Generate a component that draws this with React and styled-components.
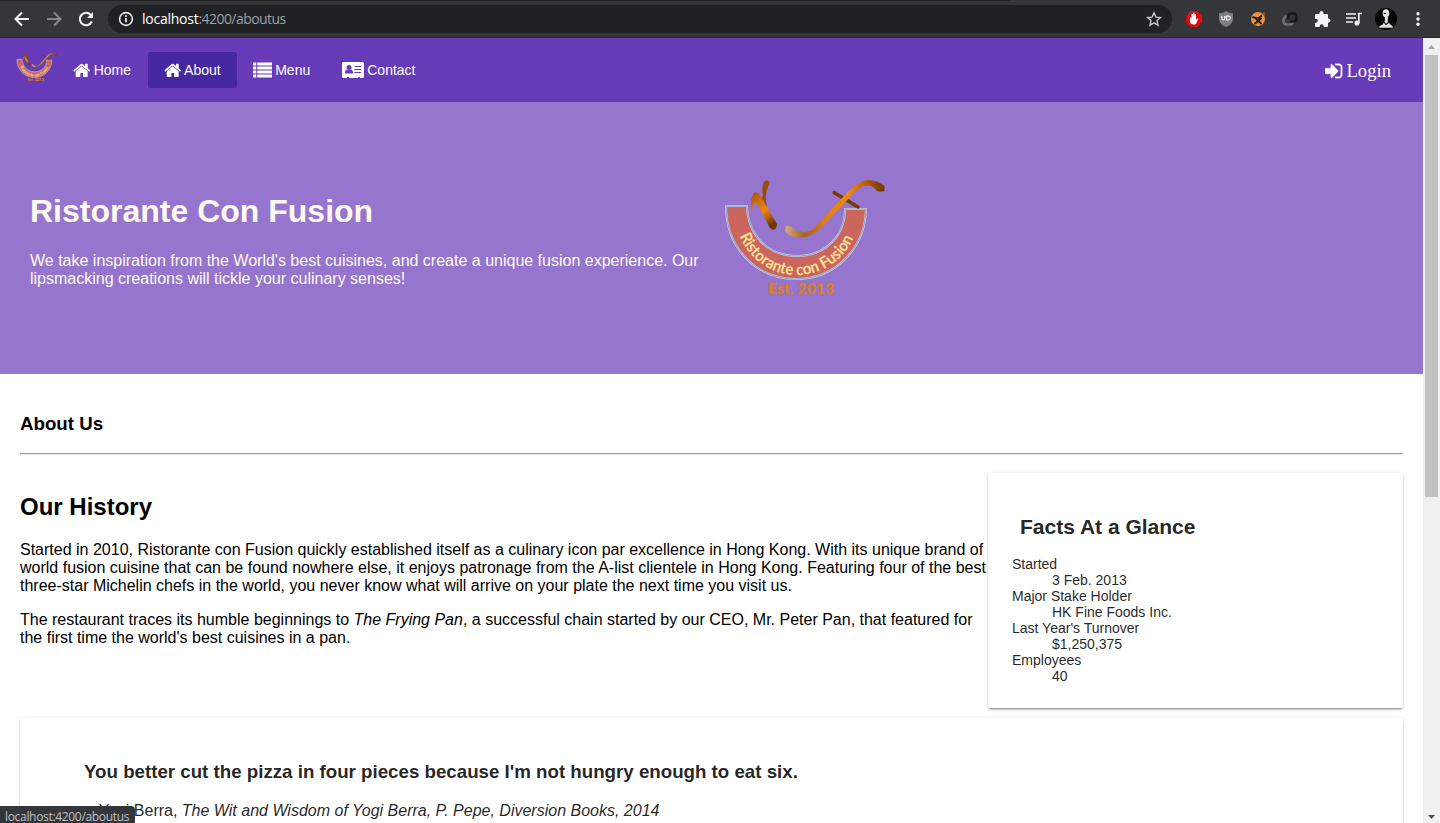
import React from 'react';
import styled, { createGlobalStyle } from 'styled-components';

const GlobalStyle = createGlobalStyle`
  *, *::before, *::after { box-sizing: border-box; }
  html, body { margin: 0; height: 100%; overflow: hidden; }
  body { font-family: "Liberation Sans", Arial, sans-serif; font-size: 16px; line-height: 18px; color: #000; background: #fff; }
`;

const Window = styled.div`
  position: relative;
  display: flex;
  flex-direction: column;
  width: 1440px;
  height: 823px;
  overflow: hidden;
`;

/* Browser chrome */
const BrowserBar = styled.header`
  flex: none;
  display: flex;
  align-items: center;
  height: 38px;
  padding-left: 12px;
  background: linear-gradient(90deg, #202124 1009px, #35363a 1009px) top / 100% 1px no-repeat, #35363a;
  border-bottom: 1px solid #2b2a30;
`;
const BarIcon = styled.svg`
  flex: none;
  display: block;
  width: ${(p) => p.$size ?? 20}px;
  height: ${(p) => p.$size ?? 20}px;
  margin-right: ${(p) => p.$gap ?? 12}px;
`;
const AddressBar = styled.div`
  display: flex;
  align-items: center;
  width: 1064px;
  height: 28px;
  padding: 0 8px;
  margin-right: 12px;
  border-radius: 14px;
  background: #202124;
`;
const Url = styled.span`
  flex: 1;
  font: 14px/20px "Open Sans", "Noto Sans", sans-serif;
  letter-spacing: -0.55px;
  color: #9aa0a6;
  b { font-weight: 400; letter-spacing: -0.25px; color: #fff; }
`;

const Viewport = styled.div`
  display: flex;
  flex: 1;
  min-height: 0;
`;
const Page = styled.div`
  flex: 1;
  min-width: 0;
  overflow: hidden;
`;
const Scrollbar = styled.div`
  display: flex;
  flex-direction: column;
  align-items: center;
  width: 17px;
  background: #f1f1f1;
`;
const ScrollArrow = styled.svg`
  flex: none;
  width: 17px;
  height: 17px;
`;
const ScrollThumb = styled.div`
  width: 13px;
  height: 442px;
  margin-bottom: auto;
  background: #c1c1c1;
`;

/* Site toolbar */
const Toolbar = styled.nav`
  display: flex;
  align-items: center;
  height: 64px;
  padding: 0 32px 0 16px;
  background: #673ab7;
  color: #fff;
`;
const SmallLogo = styled.svg`
  flex: none;
  width: 41.3px;
  height: 30px;
  margin-bottom: 7px;
`;
const NavButton = styled.a`
  display: flex;
  align-items: center;
  gap: 3px;
  height: 36px;
  padding: 0 16px;
  border-radius: 2px;
  font-size: 14px;
  background: ${(p) => (p.$active ? '#45289f' : 'transparent')};
  &:first-of-type { padding-right: 16.8px; }
`;
const LoginLink = styled.span`
  display: flex;
  align-items: center;
  gap: 3px;
  margin-left: auto;
  font: 18.67px/22px "Liberation Serif", "Times New Roman", serif;
  padding-top: 2px;
`;
const Glyph = styled.svg`
  flex: none;
  width: ${(p) => p.$w}px;
  height: ${(p) => p.$h ?? 18.67}px;
  fill: currentColor;
`;

/* Hero */
const Hero = styled.section`
  display: flex;
  align-items: flex-start;
  height: 272px;
  padding: 75px 30px 0;
  background: #9575cd;
  color: #fffaf0;
`;
const HeroText = styled.div`
  width: 693px;
  padding: 16px 20px 0 0;
`;
const HeroTitle = styled.h1`
  margin: 0 0 23px;
  font-size: 32px;
  line-height: 36px;
`;
const Paragraph = styled.p`
  margin: 0 0 16px;
`;
const HeroLogo = styled.svg`
  width: 164px;
  height: 120px;
`;

/* Content */
const Content = styled.main`
  padding: 39px 20px 0;
`;
const SectionTitle = styled.h3`
  margin: 0 0 ${(p) => p.$gap ?? 20}px;
  font-size: 18.72px;
  line-height: 21px;
`;
const Divider = styled.hr`
  height: 2px;
  margin: 0 0 18px;
  border: 1px solid;
  border-color: #9a9a9a #eee #eee #9a9a9a;
`;
const Columns = styled.div`
  display: flex;
  height: 235px;
  margin-bottom: 10px;
`;
const History = styled.article`
  width: 968px;
  padding-top: 20px;
`;
const HistoryTitle = styled.h2`
  margin: 0 0 21px;
  font-size: 24px;
  line-height: 27px;
`;
const Card = styled.section`
  flex: 1;
  border-radius: 2px;
  background: #fff;
  color: rgba(0, 0, 0, 0.87);
  box-shadow: 0 3px 1px -2px rgba(0, 0, 0, 0.2), 0 2px 2px 0 rgba(0, 0, 0, 0.14), 0 1px 5px 0 rgba(0, 0, 0, 0.12);
`;
const FactsCard = styled(Card)`
  padding: 42px 24px 24px;
`;
const FactsTitle = styled.h2`
  margin: 0 8px 17px;
  font-size: 21px;
  line-height: 24px;
`;
const Facts = styled.dl`
  margin: 0;
  font-size: 14px;
  line-height: 16px;
  dd { margin: 0 0 0 40px; }
`;
const QuoteCard = styled(Card)`
  height: 180px;
  padding: 43px 64px 0;
`;

const StatusBubble = styled.div`
  position: absolute;
  left: 0;
  bottom: 0;
  width: 135px;
  height: 17px;
  padding-left: 5px;
  border-top-right-radius: 4px;
  background: #35363a;
  color: #bdc1c6;
  font: 12px/21px "Open Sans", "Noto Sans", sans-serif;
  letter-spacing: -0.32px;
  white-space: nowrap;
`;

const HomeIcon = () => (
  <Glyph $w={17.33} viewBox="64 0 1664 1792">
    <path d="M1472 992v480q0 26-19 45t-45 19h-384v-384h-256v384h-384q-26 0-45-19t-19-45v-480q0-1 .5-3t.5-3l575-474 575 474q1 2 1 6zm223-69l-62 74q-8 9-21 11h-3q-13 0-21-7l-692-577-692 577q-12 8-24 7-13-2-21-11l-62-74q-8-10-7-23.500t11-21.500l719-599q32-26 76-26t76 26l244 204v-195q0-14 9-23t23-9h192q14 0 23 9t9 23v408l219 182q10 8 11 21.500t-7 23.500z" />
  </Glyph>
);
const ListIcon = () => (
  <Glyph $w={19.5} $h={16} viewBox="0 0 19.500 16">
    {[0, 4, 8, 12].map((y) => (
      <React.Fragment key={y}>
        <rect x="0" y={y + 0.4} width="3.300" height="3.100" rx=".4" />
        <rect x="4.200" y={y + 0.4} width="15.300" height="3.100" rx=".4" />
      </React.Fragment>
    ))}
  </Glyph>
);
const AddressCardIcon = () => (
  <Glyph $w={22} $h={18} viewBox="0 0 22 18">
    <path d="M1.500 1h19Q22 1 22 2.500v13q0 1.500-1.500 1.500H18v-1h-2v1H7v-1H5v1H1.500Q0 17 0 15.500v-13Q0 1 1.500 1z" />
    <g fill="#673ab7">
      <circle cx="7" cy="6.500" r="2.500" />
      <path d="M3 12.600q0-3.700 2-4 2 1.500 4 0 2 .3 2 4z" />
      <path d="M12.500 5H19v1h-6.500zM12.500 8H19v1h-6.500zM12.500 11H19v1h-6.500z" />
    </g>
  </Glyph>
);
const SignInIcon = () => (
  <Glyph $w={18} $h={20} viewBox="128 0 1600 1792">
    <path stroke="currentColor" strokeWidth="30" d="M1312 896q0 26-19 45l-544 544q-19 19-45 19t-45-19-19-45v-288h-448q-26 0-45-19t-19-45v-384q0-26 19-45t45-19h448v-288q0-26 19-45t45-19 45 19l544 544q19 19 19 45zm352-352v704q0 119-84.500 203.500t-203.500 84.500h-320q-13 0-22.500-9.500t-9.500-22.500q0-4-1-20t-.5-26.500 3-23.500 10-19.500 20.500-6.500h320q66 0 113-47t47-113v-704q0-66-47-113t-113-47h-312l-11.500-1-11.500-3-8-5.500-7-9-2-13.500q0-4-1-20t-.5-26.500 3-23.500 10-19.500 20.500-6.500h320q119 0 203.500 84.500t84.500 203.500z" />
  </Glyph>
);

function LogoArt({ id }) {
  return (
    <>
      <defs>
        <linearGradient id={`${id}-stroke`} x1="0" y1="0" x2="1" y2="0">
          <stop offset="0" stopColor="#d3ab8c" />
          <stop offset=".2" stopColor="#a8611c" />
          <stop offset=".42" stopColor="#e38210" />
          <stop offset=".65" stopColor="#ee8a12" />
          <stop offset=".85" stopColor="#a85406" />
          <stop offset="1" stopColor="#713600" />
        </linearGradient>
        <linearGradient id={`${id}-leg`} x1="0" y1="0" x2=".5" y2="1">
          <stop offset="0" stopColor="#a65205" />
          <stop offset=".6" stopColor="#ed8814" />
          <stop offset="1" stopColor="#713600" />
        </linearGradient>
        <path id={`${id}-arc`} d="M16 57A61.500 61.500 0 0 0 132 57" />
      </defs>
      <path d="M3 29H24C25 59 45 79 74 79S122 58 122 32H143C142 72 112 102 73 102S3 72 3 29Z" fill="#cb665f" stroke="#d9d0df" strokeWidth="2" />
      <path d="M3 29H24C25 59 45 79 74 79S122 58 122 32H143C142 72 112 102 73 102S3 72 3 29Z" fill="none" stroke="#6796d0" strokeWidth=".8" />
      <path d="M40 18Q38 8 42 4Q44 3 46 4.500Q47 7 45 10Q41 17 44 30L38 25Z" fill="#9a4c06" />
      <path d="M28 33Q27 24 30 17Q33 13 37 18L54 47Q54 52 50 53L47 51L33 25Q30 25 29.500 33Z" fill={`url(#${id}-leg)`} />
      <path d="M111 15.500L135 30" stroke="#763900" strokeWidth="3.400" strokeLinecap="round" />
      <path d="M63 49Q67 48 73 53Q83 58 90 52L120 20Q133 5 143 3Q153 2 161.500 9V14Q157 15.500 154 14Q147 5 137 11Q132 14 126 21L101 48Q89 61 76 61Q66 60 62 54Z" fill={`url(#${id}-stroke)`} />
      <text fill="#ffe093" fontFamily="Lato, sans-serif" fontSize="16" fontWeight="700">
        <textPath href={`#${id}-arc`} startOffset="2" textLength="145" lengthAdjust="spacingAndGlyphs">Ristorante con Fusion</textPath>
      </text>
      <text x="45" y="116.500" fill="#e5850f" stroke="#c5702a" strokeWidth=".35" fontFamily="Lato, sans-serif" fontSize="15.500" fontWeight="700" textLength="66">Est. 2013</text>
    </>
  );
}

const NAV = [
  { label: 'Home', icon: <HomeIcon /> },
  { label: 'About', icon: <HomeIcon />, active: true },
  { label: 'Menu', icon: <ListIcon /> },
  { label: 'Contact', icon: <AddressCardIcon /> },
];

const FACTS = [
  ['Started', '3 Feb. 2013'],
  ['Major Stake Holder', 'HK Fine Foods Inc.'],
  ["Last Year's Turnover", '$1,250,375'],
  ['Employees', '40'],
];

function Browser() {
  return (
    <BrowserBar>
      <BarIcon viewBox="0 0 20 20" fill="none" stroke="#f1f3f4" strokeWidth="2"><path d="M17 10H4M10 3.500L3.500 10l6.500 6.500" /></BarIcon>
      <BarIcon viewBox="0 0 20 20" fill="none" stroke="#85878b" strokeWidth="2"><path d="M3 10h13M10 3.500l6.500 6.500-6.500 6.500" /></BarIcon>
      <BarIcon viewBox="0 0 20 20" fill="none" stroke="#f1f3f4" strokeWidth="2"><path d="M15.800 12.500a6.200 6.200 0 1 1-1-6.500" /><path d="M17 3v6h-6z" fill="#f1f3f4" stroke="none" /></BarIcon>
      <AddressBar>
        <BarIcon $gap={6} viewBox="0 0 20 20" fill="none" stroke="#e8eaed" strokeWidth="1.600"><circle cx="10" cy="10" r="6.400" /><path d="M10 9v4.200M10 6.200v1.800" strokeWidth="1.800" /></BarIcon>
        <Url><b>localhost</b>:4200/aboutus</Url>
        <BarIcon $gap={0} viewBox="0 0 20 20" fill="none" stroke="#c6c8cb" strokeWidth="1.400"><path d="M10 3.800l1.900 4.300 4.600.4-3.500 3.100 1 4.600-4-2.400-4 2.400 1-4.600-3.500-3.100 4.600-.4z" /></BarIcon>
      </AddressBar>
      <BarIcon viewBox="0 0 20 20"><path d="M6.700 2h6.600L18 6.700v6.600L13.300 18H6.700L2 13.300V6.700z" fill="#e10b12" /><path d="M6 8.500q.8-.8 1.500.2V5.300q.8-1 1.500 0V4q.8-.8 1.500 0v1.500q.8-.8 1.500 0V11l1-1.500q1.300-.6 1.200.3l-1.900 4.400q-.5 1.300-2.300 1.300Q6 15.500 6 12z" fill="#fff" /></BarIcon>
      <BarIcon viewBox="0 0 20 20"><path d="M10 2q3 2.200 7 2.200V10q0 5-7 8-7-3-7-8V4.200Q7 4.200 10 2z" fill="#7d7d7d" /><path d="M5.800 7v2.500q0 1.400 1.500 1.400t1.500-1.400V7M10.500 7v4q3.700.3 3.700-2t-3.700-2z" fill="none" stroke="#fff" strokeWidth="1.100" /></BarIcon>
      <BarIcon viewBox="0 0 20 20"><circle cx="10" cy="10" r="7" fill="#e7943d" /><path d="M13 5l3.500-2 .5 4z" fill="#a75b16" /><path d="M4.500 8l5 1.500M14 6.500l-4 3M6.500 15l7-6M7.500 9l6 6" stroke="#2c1910" strokeWidth="1.900" /></BarIcon>
      <BarIcon viewBox="0 0 20 20" fill="none" strokeWidth="2.600"><path d="M8 7.500H7Q3.500 7.500 3.500 11.500T7 15.500H9.500Q13 15.500 13 12" stroke="#707070" /><path d="M8 10V8Q8 4.500 11.500 4.500H13q3.500 0 3.500 4T13 12.500H10" stroke="#17181a" /></BarIcon>
      <BarIcon viewBox="0 0 20 20"><path d="M4 5h3.500V4a2 2 0 0 1 4 0v1H15q1 0 1 1v3.500h.5a2 2 0 0 1 0 4H16V17q0 1-1 1h-3.300v-.8a2 2 0 0 0-4 0v.8H4q-1 0-1-1v-3.300h.8a2 2 0 0 0 0-4H3V6q0-1 1-1z" fill="#f1f3f4" /></BarIcon>
      <BarIcon $gap={11} viewBox="0 0 20 20" fill="none" stroke="#f1f3f4" strokeWidth="1.700"><path d="M2 5h10M2 9h10M2 13h7M14.800 14V4.500H18" /><circle cx="13" cy="14" r="1.700" fill="#f1f3f4" /></BarIcon>
      <BarIcon $gap={11} $size={22} viewBox="0 0 20 20"><circle cx="10" cy="10" r="10" fill="#050505" /><ellipse cx="10" cy="4.800" rx="3" ry="3.600" fill="#e5e5e5" /><path d="M9 8h3l-.5 4 2 2.500 2.500 2v1.500H4v-1.500l3-1.500 2-3.500z" fill="#ddd" /><path d="M7.500 12l2.500 3 2.500-2M8 5h2" stroke="#111" fill="none" /></BarIcon>
      <BarIcon $gap={0} viewBox="0 0 20 20" fill="#f1f3f4"><circle cx="10" cy="4.800" r="1.700" /><circle cx="10" cy="10" r="1.700" /><circle cx="10" cy="15.200" r="1.700" /></BarIcon>
    </BrowserBar>
  );
}

export default function App() {
  return (
    <Window>
      <GlobalStyle />
      <Browser />
      <Viewport>
        <Page>
          <Toolbar>
            <SmallLogo viewBox="0 0 164 120"><LogoArt id="small" /></SmallLogo>
            {NAV.map((item) => (
              <NavButton key={item.label} $active={item.active}>{item.icon}{item.label}</NavButton>
            ))}
            <LoginLink><SignInIcon />Login</LoginLink>
          </Toolbar>
          <Hero>
            <HeroText>
              <HeroTitle>Ristorante Con Fusion</HeroTitle>
              <Paragraph>We take inspiration from the World's best cuisines, and create a unique fusion experience. Our lipsmacking creations will tickle your culinary senses!</Paragraph>
            </HeroText>
            <HeroLogo viewBox="0 0 164 120"><LogoArt id="hero" /></HeroLogo>
          </Hero>
          <Content>
            <SectionTitle $gap={19}>About Us</SectionTitle>
            <Divider />
            <Columns>
              <History>
                <HistoryTitle>Our History</HistoryTitle>
                <Paragraph>Started in 2010, Ristorante con Fusion quickly established itself as a culinary icon par excellence in Hong Kong. With its unique brand of world fusion cuisine that can be found nowhere else, it enjoys patronage from the A-list clientele in Hong Kong. Featuring four of the best three-star Michelin chefs in the world, you never know what will arrive on your plate the next time you visit us.</Paragraph>
                <Paragraph>The restaurant traces its humble beginnings to <em>The Frying Pan</em>, a successful chain started by our CEO, Mr. Peter Pan, that featured for the first time the world's best cuisines in a pan.</Paragraph>
              </History>
              <FactsCard>
                <FactsTitle>Facts At a Glance</FactsTitle>
                <Facts>
                  {FACTS.map(([term, value]) => (
                    <React.Fragment key={term}><dt>{term}</dt><dd>{value}</dd></React.Fragment>
                  ))}
                </Facts>
              </FactsCard>
            </Columns>
            <QuoteCard>
              <SectionTitle>You better cut the pizza in four pieces because I'm not hungry enough to eat six.</SectionTitle>
              <Paragraph>-- Yogi Berra, <em>The Wit and Wisdom of Yogi Berra, P. Pepe, Diversion Books, 2014</em></Paragraph>
            </QuoteCard>
          </Content>
        </Page>
        <Scrollbar>
          <ScrollArrow viewBox="0 0 17 17"><path d="M5 11l3.500-4 3.500 4z" fill="#a3a3a3" /></ScrollArrow>
          <ScrollThumb />
          <ScrollArrow viewBox="0 0 17 17"><path d="M5 9l3.500 4L12 9z" fill="#505050" /></ScrollArrow>
        </Scrollbar>
      </Viewport>
      <StatusBubble>localhost:4200/aboutus</StatusBubble>
    </Window>
  );
}
